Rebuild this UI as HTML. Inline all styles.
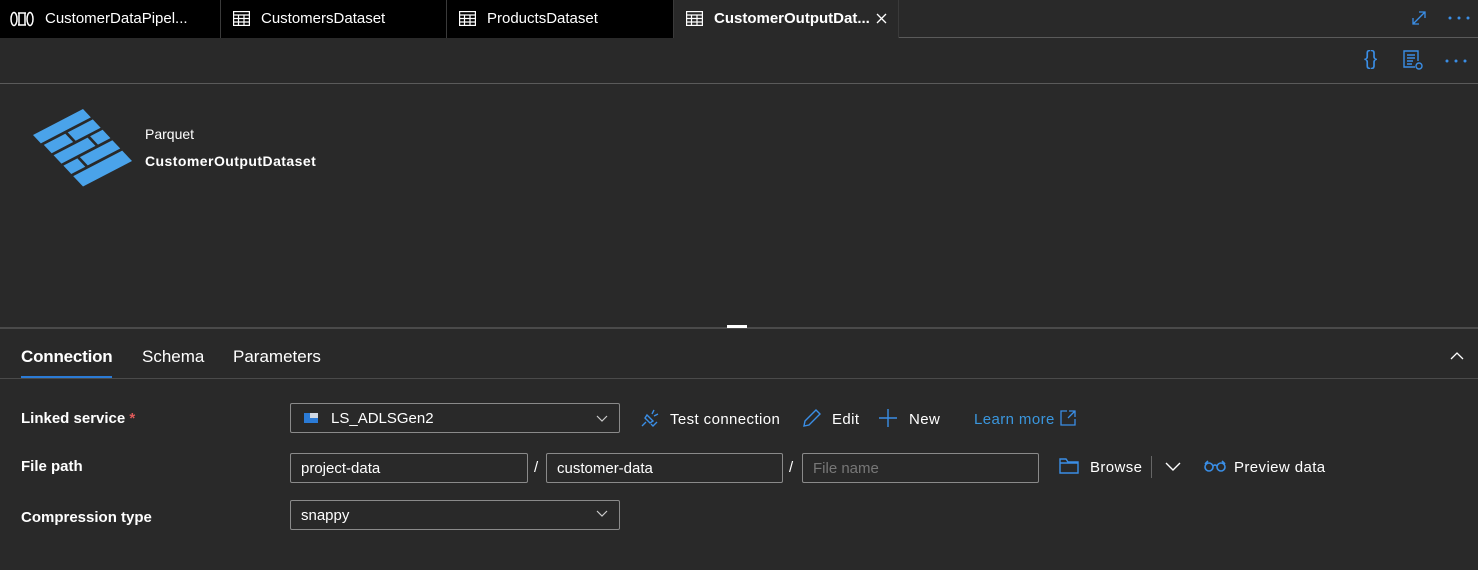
<!DOCTYPE html>
<html><head><style>
*{margin:0;padding:0;box-sizing:border-box}
body{width:1478px;height:570px;background:#292929;font-family:"Segoe UI","Liberation Sans",sans-serif;color:#fff;position:relative;overflow:hidden;font-size:15px}
.abs{position:absolute}
.tabbar{left:0;top:0;width:1478px;height:38px;background:#292929;border-bottom:1px solid #5a5a5a}
.tab{position:absolute;top:0;height:38px;background:#000;border-right:1px solid #3a3a3a;font-size:15px;line-height:38px;white-space:nowrap}
.tab.active{background:#292929;font-weight:bold}
.line{position:absolute;left:0;width:1478px;height:1px;background:#5a5a5a}
.inp{position:absolute;height:30px;border:1px solid #8a8a8a;border-radius:2px;font-size:15px;line-height:30px;padding-left:10px}
.lbl{position:absolute;font-weight:bold;font-size:15px}
.act{letter-spacing:0.4px}
.blue{color:#3a96dd}
</style></head><body>
<div class="abs tabbar"></div>
<div class="tab" style="left:0;width:221px"><svg class="abs" style="left:10px;top:11px" width="24" height="16" viewBox="0 0 24 16" fill="none" stroke="#fff" stroke-width="1.5"><ellipse cx="4" cy="8" rx="3" ry="6.5"/><ellipse cx="20" cy="8" rx="3" ry="6.5"/><path d="M8 2h8M8 14h8M9 2v12M15 2v12"/></svg><span class="abs" style="left:45px">CustomerDataPipel...</span></div>
<div class="tab" style="left:221px;width:226px"><svg class="abs" style="left:12px;top:11px" width="17" height="15" viewBox="0 0 17 15" fill="none" stroke="#fff" stroke-width="1.2"><rect x="0.6" y="0.6" width="15.8" height="13.8"/><path d="M0.6 4h15.8M0.6 7.5h15.8M0.6 11h15.8M5.5 4v10.4M11 4v10.4"/></svg><span class="abs" style="left:40px">CustomersDataset</span></div>
<div class="tab" style="left:447px;width:227px"><svg class="abs" style="left:12px;top:11px" width="17" height="15" viewBox="0 0 17 15" fill="none" stroke="#fff" stroke-width="1.2"><rect x="0.6" y="0.6" width="15.8" height="13.8"/><path d="M0.6 4h15.8M0.6 7.5h15.8M0.6 11h15.8M5.5 4v10.4M11 4v10.4"/></svg><span class="abs" style="left:40px">ProductsDataset</span></div>
<div class="tab active" style="left:674px;width:225px;border-right:1px solid #3a3a3a;height:38px"><svg class="abs" style="left:12px;top:11px" width="17" height="15" viewBox="0 0 17 15" fill="none" stroke="#fff" stroke-width="1.2"><rect x="0.6" y="0.6" width="15.8" height="13.8"/><path d="M0.6 4h15.8M0.6 7.5h15.8M0.6 11h15.8M5.5 4v10.4M11 4v10.4"/></svg><span class="abs" style="left:40px">CustomerOutputDat...</span><svg class="abs" style="left:202px;top:13px" width="11" height="11" viewBox="0 0 11 11" stroke="#fff" stroke-width="1.3"><path d="M1 1l9 9M10 1l-9 9"/></svg></div>
<svg class="abs" style="left:1411px;top:10px" width="16" height="16" viewBox="0 0 16 16" fill="none" stroke="#3a8ee6" stroke-width="1.3"><path d="M2 14L14 2M8 2h6v6M2 8v6h6"/></svg>
<svg class="abs" style="left:1448px;top:16px" width="22" height="4" fill="#3a8ee6"><circle cx="2" cy="2" r="1.5"/><circle cx="11" cy="2" r="1.5"/><circle cx="20" cy="2" r="1.5"/></svg>
<div class="line" style="top:83px"></div>
<div class="abs" style="left:1364px;top:48px;font-size:20px;color:#3a8ee6">{}</div>
<svg class="abs" style="left:1403px;top:50px" width="22" height="22" viewBox="0 0 22 22" fill="none" stroke="#3a8ee6" stroke-width="1.4"><path d="M12 17H1V1h14v10"/><path d="M4 5h8M4 8h8M4 11h6M4 14h5"/><circle cx="16" cy="16" r="3"/></svg>
<svg class="abs" style="left:1445px;top:59px" width="22" height="4" fill="#3a8ee6"><circle cx="2" cy="2" r="1.5"/><circle cx="11" cy="2" r="1.5"/><circle cx="20" cy="2" r="1.5"/></svg>
<svg class="abs" style="left:0;top:0" width="150" height="200"><g transform="matrix(50,-26,49,52,33,135)" fill="#4aa3ea"><polygon points="0,0 1,0 1,0.16 0,0.16"/><polygon points="0.02,0.2 0.45,0.2 0.45,0.36 0.02,0.36"/><polygon points="0.5,0.2 1,0.2 1,0.36 0.5,0.36"/><polygon points="0.02,0.4 0.7,0.4 0.7,0.56 0.02,0.56"/><polygon points="0.75,0.4 1,0.4 1,0.56 0.75,0.56"/><polygon points="0.02,0.6 0.3,0.6 0.3,0.76 0.02,0.76"/><polygon points="0.35,0.6 1,0.6 1,0.76 0.35,0.76"/><polygon points="0.02,0.8 1,0.8 1,1 0.02,1"/></g></svg>
<div class="abs" style="left:145px;top:126px;font-size:14px">Parquet</div>
<div class="abs" style="left:145px;top:153px;font-size:14px;font-weight:bold;letter-spacing:0.45px">CustomerOutputDataset</div>
<div class="line" style="top:327px;height:2px;background:#4a4a4a"></div>
<div class="abs" style="left:727px;top:325px;width:20px;height:3px;background:#fff"></div>
<div class="abs" style="left:21px;top:347px;font-size:17px;font-weight:bold;letter-spacing:-0.2px">Connection</div>
<div class="abs" style="left:21px;top:376px;width:91px;height:3px;background:#2b7bd6"></div>
<div class="abs" style="left:142px;top:347px;font-size:17px">Schema</div>
<div class="abs" style="left:233px;top:347px;font-size:17px">Parameters</div>
<svg class="abs" style="left:1450px;top:351px" width="14" height="9" viewBox="0 0 14 9" fill="none" stroke="#fff" stroke-width="1.3"><path d="M1 8l6-6 6 6"/></svg>
<div class="line" style="top:378px;background:#4a4a4a"></div>
<div class="lbl" style="left:21px;top:410px">Linked service <span style="color:#e05a5a">*</span></div>
<div class="lbl" style="left:21px;top:458px">File path</div>
<div class="lbl" style="left:21px;top:509px">Compression type</div>
<div class="inp" style="left:290px;top:403px;width:330px;padding-left:40px">LS_ADLSGen2</div>
<svg class="abs" style="left:304px;top:413px" width="14" height="10"><rect width="14" height="10" fill="#cfd8e3"/><rect x="0" y="5" width="14" height="5" fill="#2b7bd6"/><rect x="0" y="0" width="6" height="5" fill="#2b7bd6"/></svg>
<svg class="abs" style="left:596px;top:415px" width="12" height="8" fill="none" stroke="#ccc" stroke-width="1.2"><path d="M1 1l5 5 5-5"/></svg>
<svg class="abs" style="left:640px;top:408px" width="20" height="20" viewBox="0 0 20 20" fill="none" stroke="#3a8ee6" stroke-width="1.4"><path d="M2 18l4-4M14 2l-2 4M18 6l-4 2M7 7l6 6-3 2-5-5z"/><path d="M11 16l2 2 4-4"/></svg>
<div class="abs act" style="left:670px;top:411px">Test connection</div>
<svg class="abs" style="left:802px;top:408px" width="20" height="20" viewBox="0 0 20 20" fill="none" stroke="#3a8ee6" stroke-width="1.4"><path d="M2 18l1-5L14 2l4 4L7 17z"/></svg>
<div class="abs act" style="left:832px;top:411px">Edit</div>
<svg class="abs" style="left:878px;top:408px" width="20" height="20" stroke="#3a8ee6" stroke-width="1.4"><path d="M10 1v18M1 10h18"/></svg>
<div class="abs act" style="left:909px;top:411px">New</div>
<div class="abs blue act" style="left:974px;top:411px">Learn more</div>
<svg class="abs" style="left:1060px;top:410px" width="16" height="16" fill="none" stroke="#3a8ee6" stroke-width="1.3"><path d="M7 1H1v14h14V9M9 1h6v6M15 1L8 8"/></svg>
<div class="inp" style="left:290px;top:453px;width:238px">project-data</div>
<div class="abs" style="left:534px;top:459px">/</div>
<div class="inp" style="left:546px;top:453px;width:237px">customer-data</div>
<div class="abs" style="left:789px;top:459px">/</div>
<div class="inp" style="left:802px;top:453px;width:237px;color:#777">File name</div>
<svg class="abs" style="left:1059px;top:458px" width="20" height="16" fill="none" stroke="#3a8ee6" stroke-width="1.4"><path d="M1 1h6l2 3h10v11H1zM1 5h18"/></svg>
<div class="abs act" style="left:1090px;top:459px">Browse</div>
<div class="abs" style="left:1151px;top:456px;width:1px;height:22px;background:#666"></div>
<svg class="abs" style="left:1165px;top:462px" width="16" height="9" fill="none" stroke="#fff" stroke-width="1.4"><path d="M1 1l7 7 7-7"/></svg>
<svg class="abs" style="left:1204px;top:460px" width="22" height="12" fill="none" stroke="#3a8ee6" stroke-width="1.6"><circle cx="5" cy="7" r="4"/><circle cx="17" cy="7" r="4"/><path d="M9 6q2-2 4 0M1 4l3-3M21 4l-3-3"/></svg>
<div class="abs act" style="left:1234px;top:459px">Preview data</div>
<div class="inp" style="left:290px;top:500px;width:330px">snappy</div>
<svg class="abs" style="left:596px;top:510px" width="12" height="8" fill="none" stroke="#ccc" stroke-width="1.2"><path d="M1 1l5 5 5-5"/></svg>
</body></html>
